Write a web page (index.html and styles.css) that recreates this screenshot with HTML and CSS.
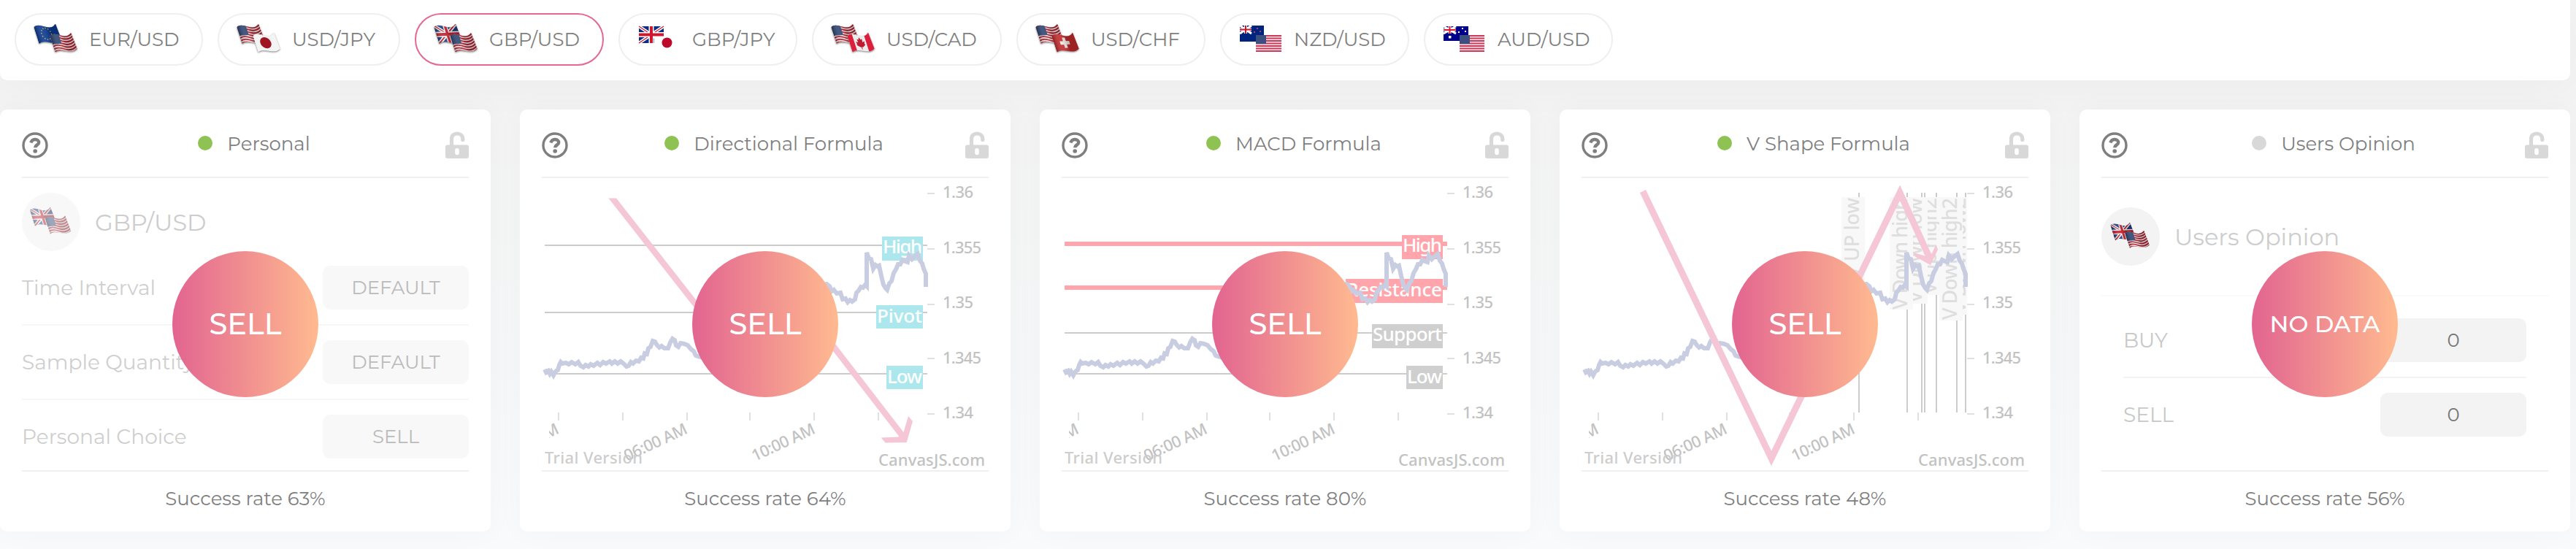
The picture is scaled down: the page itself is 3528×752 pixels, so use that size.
FILE: index.html
```html
<!DOCTYPE html>
<html lang="en">
<head>
    <meta charset="UTF-8">
    <meta name="viewport" content="width=device-width, initial-scale=1.0">
    <title>Forex signals</title>
    <link rel="stylesheet" href="styles.css">
</head>
<body>

<!-- shared icons and chart parts -->
<svg class="defs" width="0" height="0">
    <defs>
        <clipPath id="wave"><path d="M0 1C5-2 9-1 15 1S26 2 30-2L31.500 17C25 21 20 20 15 19S5 17 0 20Z"/></clipPath>
        <clipPath id="labels"><path d="M10 320H612V400H10Z"/></clipPath>
        <linearGradient id="shade">
            <stop offset="0" stop-color="#000" stop-opacity=".3"/>
            <stop offset=".3" stop-color="#fff" stop-opacity=".1"/>
            <stop offset=".6" stop-color="#000" stop-opacity=".2"/>
            <stop offset="1" stop-color="#000" stop-opacity=".2"/>
        </linearGradient>
        <path id="stripe" d="M-1 0C5-3 9-2 15 0S26 1 32-3"/>

        <g id="us">
            <path fill="#f3eeee" d="M-1-4H32V24H-1Z"/>
            <g fill="none" stroke="#b3202f" stroke-width="1.7">
                <use href="#stripe" y="1.4"/>
                <use href="#stripe" y="4.5"/>
                <use href="#stripe" y="7.6"/>
                <use href="#stripe" y="10.7"/>
                <use href="#stripe" y="13.8"/>
                <use href="#stripe" y="16.9"/>
                <use href="#stripe" y="20"/>
            </g>
            <path fill="#2d4673" d="M-1-3H12.500V10.500H-1Z"/>
        </g>
        <g id="eu">
            <path fill="#0b3a94" d="M-1-4H32V24H-1Z"/>
            <circle cx="14" cy="9" r="6.500" fill="none" stroke="#d8c04a" stroke-width="1.300" stroke-dasharray="1.200 2.200"/>
        </g>
        <g id="gb">
            <path fill="#1f3c7d" d="M-1-4H32V24H-1Z"/>
            <path stroke="#fff" stroke-width="4" d="M0-1L30 20M30-2L0 20"/>
            <path stroke="#c8202f" stroke-width="1.400" d="M0-1L30 20M30-2L0 20"/>
            <path stroke="#fff" stroke-width="6" d="M15-4V24M-1 9.500H32"/>
            <path stroke="#c8202f" stroke-width="3.400" d="M15-4V24M-1 9.500H32"/>
        </g>
        <g id="jp">
            <path fill="#f4f4f4" d="M-1-4H32V24H-1Z"/>
            <ellipse cx="14.500" cy="9.500" rx="7.500" ry="6.500" fill="#a01522"/>
        </g>
        <g id="ca">
            <path fill="#ececec" d="M-1-4H32V24H-1Z"/>
            <path fill="#dc1f3c" d="M-1-4H7V24H-1ZM23-4H32V24H23Z"/>
            <path fill="#c01a30" d="M15 3l1.500 3 2-1-.5 4 3-1-1 3 1 1-4 2.500h-1.500V17h-1v-2.500H13L9 12l1-1-1-3 3 1-.5-4 2 1Z"/>
        </g>
        <g id="ch">
            <path fill="#c42a2c" d="M-1-4H32V24H-1Z"/>
            <path stroke="#f3e9e6" stroke-width="4" d="M15 3.500V15.500M8.500 9.500H21.500"/>
        </g>

        <g id="flag-us-back"><g transform="matrix(1.02 -.04 .38 1.2 0 3)" clip-path="url(#wave)"><use href="#us"/><path fill="url(#shade)" d="M0-4H32V24H0Z"/></g></g>
        <g id="flag-gb-back"><g transform="matrix(1.02 -.04 .38 1.2 0 3)" clip-path="url(#wave)"><use href="#gb"/><path fill="url(#shade)" d="M0-4H32V24H0Z"/></g></g>
        <g id="flag-us-front"><g transform="matrix(.99 -.04 .38 1.18 22 15)" clip-path="url(#wave)"><use href="#us"/><path fill="url(#shade)" d="M0-4H32V24H0Z"/></g></g>

        <symbol id="gbpusd" viewBox="0 0 62 42">
            <use href="#flag-gb-back"/>
            <use href="#flag-us-front"/>
        </symbol>

        <symbol id="help" viewBox="0 0 36 36">
            <circle cx="18" cy="18" r="16" fill="none" stroke="#7f7f7f" stroke-width="3.400"/>
            <path fill="none" stroke="#7f7f7f" stroke-width="4.400" d="M12.300 14.500C13.300 11.500 15.300 10 18 10C21 10 23.200 11.800 23.200 14.200C23.200 17.400 18.300 17.400 18.300 21.300"/>
            <circle cx="18.200" cy="26" r="2.800" fill="#7f7f7f"/>
        </symbol>
        <symbol id="lock" viewBox="0 0 32 37">
            <path fill="none" stroke="#d8d8d8" stroke-width="5.200" stroke-linecap="round" d="M8.500 20V10.500C8.500 5.800 11.800 3 16 3S23.800 5.800 23.800 10.500V11.500"/>
            <path fill="#d8d8d8" fill-rule="evenodd" d="M3 18.500H29A3 3 0 0 1 32 21.500V34A3 3 0 0 1 29 37H3A3 3 0 0 1 0 34V21.500A3 3 0 0 1 3 18.500ZM16 23A2.800 2.800 0 0 0 13.200 25.800V29.400A2.800 2.800 0 0 0 18.800 29.400V25.800A2.800 2.800 0 0 0 16 23Z"/>
        </symbol>

        <g id="axes">
            <path class="tick" d="M528 21h10M528 97h10M528 173h10M528 247h10M528 323h10M23 321v11M111 321v11M199 321v11M285 321v11M373 321v11M461 321v11"/>
            <g class="axis-text">
                <text x="549" y="27" textLength="42">1.36</text>
                <text x="549" y="103" textLength="53">1.355</text>
                <text x="549" y="178" textLength="42">1.35</text>
                <text x="549" y="254" textLength="53">1.345</text>
                <text x="549" y="329" textLength="42">1.34</text>
                <g clip-path="url(#labels)">
                    <text transform="translate(25 349) rotate(-25)" text-anchor="end">02:00 AM</text>
                </g>
                <text transform="translate(201 349) rotate(-25)" text-anchor="end" textLength="93">06:00 AM</text>
                <text transform="translate(376 349) rotate(-25)" text-anchor="end" textLength="93">10:00 AM</text>
                <text x="461" y="394" textLength="146">CanvasJS.com</text>
                <text class="trial" x="4" y="391" textLength="134">Trial Version</text>
            </g>
        </g>
        <path id="series" class="series" d="M4 262L6 266L9 264L11 268L13 265L16 270L18 266L20 264L22 263L24 256L26 252L28 254L33 253L37 255L41 252L46 255L50 252L53 257L57 259L60 256L64 258L67 255L71 257L76 253L80 256L84 252L88 254L93 251L96 254L100 251L104 254L108 251L112 254L116 258L119 257L122 252L125 254L129 250L133 251L136 246L139 247L141 240L144 241L146 233L149 231L152 223L155 224L158 229L161 232L164 230L168 233L173 233L176 225L179 220L182 222L184 229L187 231L190 226L195 227L200 229L204 234L208 237L211 243L217 245L240 250L380 148L390 145L394 148L397 155L400 153L404 158L409 157L412 166L416 165L419 170L422 167L425 169L429 166L431 157L434 154L437 149L440 150L443 146L445 148V102L448 110L451 111L454 124L457 119L460 121L462 120L465 134L468 146L471 151L473 153L476 144L479 141L482 130L485 125L488 118L491 118L494 112L498 114L501 115L503 106L507 111L511 107L515 104L518 113L521 117L523 124L526 131V149"/>
    </defs>
</svg>

<div class="pairs">
    <div class="pair">
        <svg class="flags" viewBox="0 0 62 42">
            <g transform="matrix(1.02 -.04 .38 1.2 0 3)" clip-path="url(#wave)"><use href="#eu"/><path fill="url(#shade)" d="M0-4H32V24H0Z"/></g>
            <use href="#flag-us-front"/>
        </svg>
        <span>EUR/USD</span>
    </div>
    <div class="pair">
        <svg class="flags" viewBox="0 0 62 42">
            <use href="#flag-us-back"/>
            <g transform="matrix(.99 -.04 .38 1.18 22 15)" clip-path="url(#wave)"><use href="#jp"/></g>
        </svg>
        <span>USD/JPY</span>
    </div>
    <div class="pair active">
        <svg class="flags"><use href="#gbpusd"/></svg>
        <span>GBP/USD</span>
    </div>
    <div class="pair">
        <svg class="flags flat" viewBox="0 0 62 42">
            <g transform="translate(2 3)">
                <path fill="#0d2c86" d="M0 0H34V23H0Z"/>
                <path stroke="#fff" stroke-width="4.500" d="M0 0L34 23M34 0L0 23"/>
                <path stroke="#cf1730" stroke-width="1.200" d="M0 0L34 23M34 0L0 23"/>
                <path stroke="#fff" stroke-width="7" d="M17 0V23M0 11.500H34"/>
                <path stroke="#cf1730" stroke-width="4" d="M17 0V23M0 11.500H34"/>
                <path fill="#fff" d="M21 14H56V37H21Z"/>
                <circle cx="38.500" cy="22.500" r="7" fill="#bd0a2c"/>
            </g>
        </svg>
        <span>GBP/JPY</span>
    </div>
    <div class="pair">
        <svg class="flags" viewBox="0 0 62 42">
            <use href="#flag-us-back"/>
            <g transform="matrix(.99 -.04 .38 1.18 22 15)" clip-path="url(#wave)"><use href="#ca"/></g>
        </svg>
        <span>USD/CAD</span>
    </div>
    <div class="pair">
        <svg class="flags" viewBox="0 0 62 42">
            <use href="#flag-us-back"/>
            <g transform="matrix(.99 -.04 .38 1.18 22 15)" clip-path="url(#wave)"><use href="#ch"/><path fill="url(#shade)" d="M0-4H32V24H0Z"/></g>
        </svg>
        <span>USD/CHF</span>
    </div>
    <div class="pair">
        <svg class="flags flat" viewBox="0 0 62 42">
            <path fill="#00247d" d="M1 2H34V24H1Z"/>
            <path stroke="#fff" stroke-width="3" d="M1 2L17 13M17 2L1 13"/>
            <path stroke="#fff" stroke-width="4" d="M9 2V13M1 7.500H17"/>
            <path stroke="#cc142b" stroke-width="2" d="M9 2V13M1 7.500H17"/>
            <path fill="#a8436b" d="M24 5h2v2h-2zM20 10h2v2h-2zM28 9h2v2h-2zM24 19h2v2h-2z"/>
            <path fill="#f6e9ee" d="M23 15H58V38H23Z"/>
            <path stroke="#cf3a5b" stroke-width="1.800" d="M23 16H58M23 19.500H58M23 23H58M23 26.500H58M23 30H58M23 33.500H58M23 37H58"/>
            <path fill="#3c4f7e" d="M23 15H37V27H23Z"/>
        </svg>
        <span>NZD/USD</span>
    </div>
    <div class="pair">
        <svg class="flags flat" viewBox="0 0 62 42">
            <path fill="#00008b" d="M1 3H35V23H1Z"/>
            <path stroke="#fff" stroke-width="3" d="M1 3L18 13M18 3L1 13"/>
            <path stroke="#fff" stroke-width="4" d="M9.500 3V13M1 8H18"/>
            <path stroke="#e0142b" stroke-width="2" d="M9.500 3V13M1 8H18"/>
            <path fill="#fff" d="M8 16h3.500v3.500H8zM26 5h2v2h-2zM21 10h2v2h-2zM30 9h2v2h-2zM26 18h2v2h-2z"/>
            <path fill="#f6e9ee" d="M23 15H57V38H23Z"/>
            <path stroke="#cf3a5b" stroke-width="1.800" d="M23 16H57M23 19.500H57M23 23H57M23 26.500H57M23 30H57M23 33.500H57M23 37H57"/>
            <path fill="#3c4f7e" d="M23 15H37V27H23Z"/>
        </svg>
        <span>AUD/USD</span>
    </div>
</div>

<div class="cards">
    <div class="card">
        <div class="card-header">
            <svg class="help"><use href="#help"/></svg>
            <div class="card-title"><i class="dot"></i>Personal</div>
            <svg class="lock"><use href="#lock"/></svg>
        </div>
        <div class="card-body personal">
            <div class="user">
                <div class="avatar"><svg><use href="#gbpusd"/></svg></div>
                <span class="user-name">GBP/USD</span>
            </div>
            <div class="row"><span>Time Interval</span><div class="box">DEFAULT</div></div>
            <div class="row"><span>Sample Quantity</span><div class="box">DEFAULT</div></div>
            <div class="row"><span>Personal Choice</span><div class="box">SELL</div></div>
        </div>
        <div class="signal">SELL</div>
        <div class="card-footer">Success rate 63%</div>
    </div>

    <div class="card">
        <div class="card-header">
            <svg class="help"><use href="#help"/></svg>
            <div class="card-title"><i class="dot"></i>Directional Formula</div>
            <svg class="lock"><use href="#lock"/></svg>
        </div>
        <div class="card-body">
            <svg class="chart" viewBox="0 0 612 400">
                <path class="level" d="M4 92H528M4 184H528M4 268H528"/>
                <g class="level-label cyan">
                    <rect x="466" y="80" width="56" height="33"/>
                    <text x="467" y="103" textLength="54">High</text>
                    <rect x="458" y="174" width="64" height="32"/>
                    <text x="459" y="198" textLength="62">Pivot</text>
                    <rect x="472" y="257" width="50" height="32"/>
                    <text x="473" y="281" textLength="48">Low</text>
                </g>
                <use href="#axes"/>
                <use href="#series"/>
                <path class="trend" stroke-width="8.500" d="M94 24L225 191L385 212L494 353"/>
                <path fill="#fff" d="M86 16H106V27.500H86Z"/>
                <path class="trend-head" d="M464.700 355.500L488 354.500L495.500 348L502 326L508 333L499.700 362L470.700 362.500Z"/>
            </svg>
        </div>
        <div class="signal">SELL</div>
        <div class="card-footer">Success rate 64%</div>
    </div>

    <div class="card">
        <div class="card-header">
            <svg class="help"><use href="#help"/></svg>
            <div class="card-title"><i class="dot"></i>MACD Formula</div>
            <svg class="lock"><use href="#lock"/></svg>
        </div>
        <div class="card-body">
            <svg class="chart" viewBox="0 0 612 400">
                <path class="level red" d="M4 90H528M4 150H528"/>
                <path class="level" d="M4 212H528M4 268H528"/>
                <g class="level-label pink">
                    <rect x="466" y="78" width="56" height="33"/>
                    <text x="467" y="101" textLength="54">High</text>
                    <rect x="389" y="138" width="133" height="33"/>
                    <text x="390" y="162" textLength="131">Resistance</text>
                </g>
                <g class="level-label gray">
                    <rect x="425" y="200" width="97" height="33"/>
                    <text x="426" y="223" textLength="95">Support</text>
                    <rect x="472" y="257" width="50" height="32"/>
                    <text x="473" y="281" textLength="48">Low</text>
                </g>
                <use href="#axes"/>
                <use href="#series"/>
            </svg>
        </div>
        <div class="signal">SELL</div>
        <div class="card-footer">Success rate 80%</div>
    </div>

    <div class="card">
        <div class="card-header">
            <svg class="help"><use href="#help"/></svg>
            <div class="card-title"><i class="dot"></i>V Shape Formula</div>
            <svg class="lock"><use href="#lock"/></svg>
        </div>
        <div class="card-body">
            <svg class="chart" viewBox="0 0 612 400">
                <path class="level" d="M380 20V321M446 20V321M466 20V321M470 20V321M486 20V321M514 20V321M526 20V321"/>
                <g class="v-label">
                    <rect x="502" y="26" width="26" height="161"/>
                    <text transform="translate(526 27) rotate(-90)" textLength="158">V Down low2</text>
                    <rect x="462" y="26" width="32" height="134"/>
                    <text transform="translate(486 27) rotate(-90)" textLength="132">V Up high2</text>
                    <rect x="442" y="26" width="32" height="146"/>
                    <text transform="translate(466 27) rotate(-90)" textLength="144">V Down low</text>
                    <rect x="422" y="26" width="32" height="154"/>
                    <text transform="translate(446 27) rotate(-90)" textLength="153">V Down high</text>
                    <rect x="490" y="26" width="32" height="169"/>
                    <text transform="translate(514 27) rotate(-90)" textLength="167">V Down high2</text>
                    <rect x="356" y="26" width="32" height="114"/>
                    <text transform="translate(380 27) rotate(-90)" textLength="110">V UP low</text>
                </g>
                <use href="#axes"/>
                <use href="#series"/>
                <path class="trend" stroke-width="9" d="M84 18L260 384L436 20L477 110"/>
                <path class="trend-head" d="M454.500 102L472 107L479 105L485.500 91L488 98L478 119L457 107.500Z"/>
            </svg>
        </div>
        <div class="signal">SELL</div>
        <div class="card-footer">Success rate 48%</div>
    </div>

    <div class="card">
        <div class="card-header">
            <svg class="help"><use href="#help"/></svg>
            <div class="card-title"><i class="dot off"></i>Users Opinion</div>
            <svg class="lock"><use href="#lock"/></svg>
        </div>
        <div class="card-body opinion">
            <div class="user">
                <div class="avatar"><svg><use href="#gbpusd"/></svg></div>
                <span class="user-name">Users Opinion</span>
            </div>
            <div class="votes">
                <div class="row"><span>BUY</span><div class="box">0</div></div>
                <div class="row"><span>SELL</span><div class="box">0</div></div>
            </div>
        </div>
        <div class="signal small">NO DATA</div>
        <div class="card-footer">Success rate 56%</div>
    </div>
</div>

</body>
</html>
```

FILE: styles.css
```css
* {
    box-sizing: border-box;
}
body {
    margin: 0;
    height: 752px;
    overflow: hidden;
    background: linear-gradient(#f3f3f3 110px, #f8fafb 700px);
    font-family: Montserrat, Inter, "Liberation Sans", sans-serif;
    font-size: 26px;
    color: #7f7f7f;
}
.defs {
    position: absolute;
}

/* currency pairs */
.pairs {
    display: grid;
    grid-template-columns: 258px 250px 259px 245px 260px 259px 259px 259px;
    gap: 20px;
    width: 3520px;
    height: 110px;
    padding: 18px 20px 20px;
    background-color: #fff;
    border-radius: 0 0 10px 10px;
    box-shadow: 0 10px 60px rgba(0, 0, 0, 0.03);
}
.pair {
    display: flex;
    align-items: center;
    height: 72px;
    padding-left: 24px;
    border: 2px solid #efefef;
    border-radius: 36px;
    white-space: nowrap;
}
.pair.active {
    border-color: #e5688f;
}
.flags {
    width: 62px;
    height: 42px;
    margin-right: 14px;
    filter: drop-shadow(0 1px 1px rgba(0, 0, 0, 0.5));
}
.flags.flat {
    margin-right: 13px;
    filter: none;
}

/* cards */
.cards {
    display: grid;
    grid-template-columns: repeat(5, 672px);
    gap: 40px;
    margin-top: 40px;
}
.card {
    position: relative;
    height: 578px;
    padding: 0 30px;
    background-color: #fff;
    border-radius: 10px;
    box-shadow: 0 0 40px rgba(0, 0, 0, 0.03);
}
.card-header {
    display: flex;
    justify-content: space-between;
    height: 94px;
    padding-top: 30px;
    border-bottom: 2px solid #efefef;
}
.card-title {
    display: flex;
    align-items: center;
    height: 34px;
    padding-left: 20px;
}
.help {
    width: 36px;
    height: 36px;
    margin-top: 1px;
}
.lock {
    width: 32px;
    height: 37px;
}
.dot {
    width: 20px;
    height: 20px;
    margin: -2px 20px 0 0;
    border-radius: 50%;
    background-color: #8ec252;
}
.dot.off {
    background-color: #d8d8d8;
}
.card-body {
    display: flow-root;
    height: 402px;
    border-bottom: 2px solid #efefef;
}
.card-footer {
    padding-top: 20px;
    line-height: 34px;
    text-align: center;
}

/* personal and opinion */
.user {
    display: flex;
    align-items: center;
    height: 80px;
    margin-top: 20px;
    font-size: 32px;
    color: #cdcdcd;
}
.avatar {
    display: flex;
    align-items: center;
    justify-content: center;
    width: 80px;
    height: 80px;
    margin-right: 20px;
    border-radius: 50%;
    background-color: #f3f3f3;
}
.avatar svg {
    width: 56px;
    height: 38px;
}
.personal .avatar {
    background-color: #f8f8f8;
}
.personal .avatar svg {
    width: 60px;
    height: 40px;
    opacity: 0.5;
}
.row {
    display: flex;
    align-items: center;
    justify-content: space-between;
    height: 102px;
    font-size: 28px;
    color: #cfcfcf;
    border-bottom: 2px solid #f6f6f6;
}
.row:last-child {
    height: 100px;
    border-bottom: none;
}
.box {
    width: 200px;
    height: 60px;
    border-radius: 10px;
    background-color: #f8f8f8;
    font-size: 26px;
    line-height: 60px;
    text-align: center;
    color: #bbb;
}
.opinion .user {
    height: 162px;
    margin: 0;
    border-bottom: 2px solid #fafafa;
}
.votes {
    padding: 10px 30px 0;
}
.votes .row {
    color: #c8c8c8;
    border-color: #f3f3f3;
}
.votes .box {
    background-color: #f3f3f3;
    color: #777;
}

/* signal circle, over the body */
.signal {
    position: absolute;
    top: 194px;
    left: 236px;
    width: 200px;
    height: 200px;
    border-radius: 50%;
    background: linear-gradient(90deg, #e26490, #ffba90);
    color: #fff;
    font-size: 40px;
    font-weight: 500;
    line-height: 200px;
    text-align: center;
    white-space: nowrap;
}
.signal.small {
    font-size: 32px;
}

/* charts */
.chart {
    display: block;
    width: 612px;
    height: 400px;
    font-family: "Noto Sans", "Open Sans", sans-serif;
}
.tick {
    stroke: #e0e0e0;
    stroke-width: 2;
}
.axis-text {
    font-size: 22px;
    font-weight: 500;
    fill: #c2c2c2;
}
.trial {
    fill: #cdcdcd;
}
.level {
    stroke: #cccccc;
    stroke-width: 2;
}
.level.red {
    stroke: #ffa5ab;
    stroke-width: 6;
}
.level-label {
    font-size: 26px;
    font-weight: 500;
}
.level-label text {
    fill: #fff;
}
.cyan {
    fill: #ace7ee;
}
.pink {
    fill: #ffa5ab;
}
.gray {
    fill: #cfcfcf;
}
.v-label {
    font-size: 27px;
    font-weight: 500;
    fill: #f8f8f8;
}
.v-label text {
    fill: #dedede;
    text-anchor: end;
}
.series {
    fill: none;
    stroke: #c9cde2;
    stroke-width: 6;
}
.trend {
    fill: none;
    stroke: #f5c6d6;
}
.trend-head {
    fill: #f5c6d6;
}
```
